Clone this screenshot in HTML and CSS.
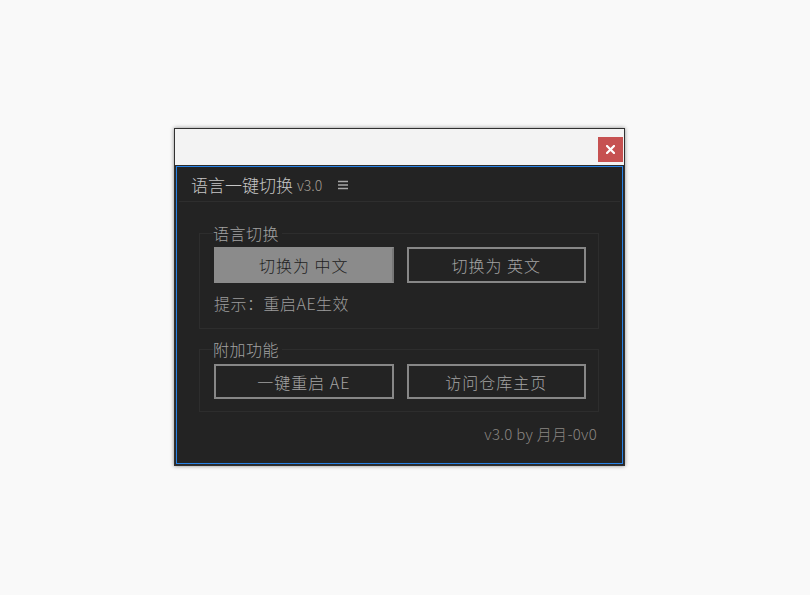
FILE: index.html
```html
<!DOCTYPE html>
<html lang="zh-CN">
<head>
<meta charset="utf-8">
<title>语言一键切换</title>
<link rel="stylesheet" href="styles.css">
</head>
<body>
<div class="window">
  <div class="titlebar">
    <button class="close" aria-label="关闭">
      <svg width="9" height="9" viewBox="0 0 9 9"><path d="M1 1L8 8M8 1L1 8" stroke="#fff" stroke-width="2.2" stroke-linecap="square"/></svg>
    </button>
  </div>
  <div class="panel">
    <div class="header">
      <span class="title">语言一键切换</span>
      <span class="ver">v3.0</span>
      <svg class="menu" width="10" height="10" viewBox="0 0 10 10"><path d="M0 1.5H10M0 5H10M0 8.5H10" stroke="#a8a8a8" stroke-width="1.4"/></svg>
    </div>
    <fieldset class="group first">
      <legend>语言切换</legend>
      <div class="row">
        <button class="btn active">切换为 中文</button>
        <button class="btn">切换为 英文</button>
      </div>
      <p class="hint">提示：重启AE生效</p>
    </fieldset>
    <fieldset class="group second">
      <legend>附加功能</legend>
      <div class="row">
        <button class="btn">一键重启 AE</button>
        <button class="btn">访问仓库主页</button>
      </div>
    </fieldset>
    <div class="footer">v3.0 by 月月-0v0</div>
  </div>
</div>
</body>
</html>
```
FILE: styles.css
```css
html, body {
  margin: 0;
  padding: 0;
}
body {
  background: #f9f9f9;
  font-family: "Noto Sans CJK SC", "Noto Sans", sans-serif;
  font-weight: 300;
  height: 595px;
}
.window {
  margin: 128px 0 0 174px;
  width: 449px;
  border: 1px solid #303030;
  background: #2a2a2a;
  box-shadow: 0 0 4px rgba(0, 0, 0, 0.45);
}
.titlebar {
  height: 37px;
  background: #f3f3f3;
  border-bottom: 1px solid #2a2a2a;
  display: flex;
  justify-content: flex-end;
  align-items: flex-start;
  box-sizing: border-box;
  padding: 8px 1px 0 0;
}
.close {
  width: 25px;
  height: 25px;
  border: 0;
  padding: 0;
  background: #c65151;
  display: flex;
  align-items: center;
  justify-content: center;
}
.panel {
  margin: 0 1px 1px 1px;
  height: 298px;
  box-sizing: border-box;
  border: 1px solid #2782e6;
  background: #232323;
  display: flex;
  flex-direction: column;
}
.header {
  height: 34px;
  margin: 0 2px;
  border-bottom: 1px solid #2e2e2e;
  display: flex;
  align-items: center;
  padding-left: 12px;
  box-sizing: content-box;
}
.title {
  font-size: 17px;
  color: #c6c6c6;
  line-height: 20px;
  margin-top: 1px;
}
.ver {
  font-size: 14px;
  color: #a39d93;
  margin-left: 4px;
  line-height: 20px;
  margin-top: 2px;
}
.menu {
  margin-left: 16px;
  margin-top: 2px;
}
.group {
  margin: 21px 0 0 22px;
  width: 400px;
  box-sizing: border-box;
  border: 1px solid #2d2d2d;
  padding: 4px 12px 15px 14px;
  min-width: 0;
}
.group.second {
  margin-top: 10px;
  padding-top: 5px;
  padding-bottom: 12px;
}
legend {
  font-size: 16px;
  line-height: 20px;
  color: #a2a2a2;
  padding: 0 3px 0 0;
  margin-left: -1px;
  letter-spacing: 0.5px;
}
.row {
  display: flex;
  gap: 13px;
}
.btn {
  width: 180px;
  height: 36px;
  box-sizing: border-box;
  border: 2px solid #878787;
  background: transparent;
  color: #a3a3a3;
  font-family: "Noto Sans CJK SC", "Noto Sans", sans-serif;
  font-weight: 300;
  font-size: 16px;
  letter-spacing: 1px;
  padding: 0;
  line-height: 20px;
}
.second .btn {
  height: 35px;
}
.btn.active {
  background: #8b8b8b;
  border-color: #8b8b8b;
  border-right-color: #777;
  color: #1e1e1e;
}
.hint {
  margin: 10px 0 0 0;
  font-size: 16px;
  line-height: 20px;
  letter-spacing: 0.5px;
  color: #9c9c9c;
}
.footer {
  margin-top: 12px;
  padding-right: 25px;
  text-align: right;
  font-size: 15px;
  letter-spacing: 0.3px;
  line-height: 20px;
  color: #8a8682;
}
```
